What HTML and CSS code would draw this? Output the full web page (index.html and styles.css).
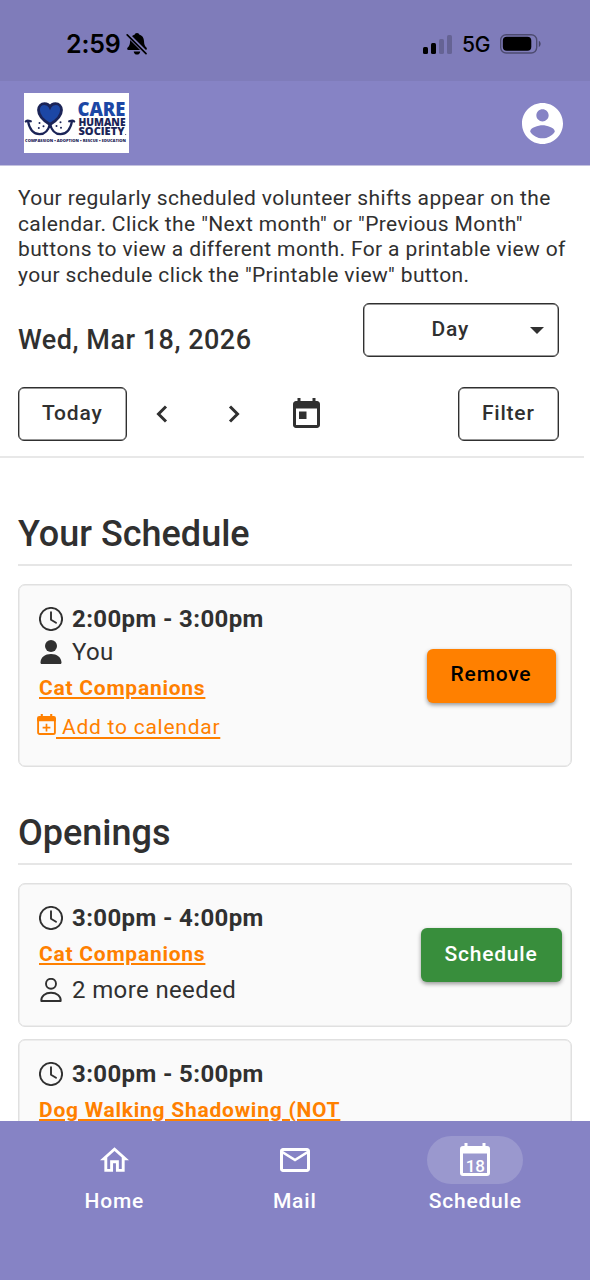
FILE: index.html
```html
<!DOCTYPE html>
<html lang="en">
<head>
<meta charset="utf-8">
<title>Schedule</title>
<link rel="stylesheet" href="styles.css">
</head>
<body>
<svg width="0" height="0" class="defs">
  <symbol id="clock" viewBox="0 0 24 24"><circle cx="12" cy="12" r="11.100"/><path d="M12 5.200V12.800l5 3"/></symbol>
</svg>
<div class="screen">
  <div class="status">
    <div class="status-left">
      <span class="time">2:59</span>
      <svg class="bell" viewBox="0 0 22 22"><path d="M11 0c1.600 0 2 .8 2.200 1.400 3 .8 4.600 3.300 4.800 6.600.1 3.500.7 5 2.600 6.800.6.7.4 2.200-1 2.200H2.500c-1.400 0-1.700-1.300-1-2.200C3.400 12.800 4 11.500 4.100 8c.1-3.300 1.700-5.800 4.700-6.600C9 .8 9.400 0 11 0zM7.700 18.400h6.600c-.2 1.900-1.500 3.200-3.300 3.200s-3.100-1.300-3.300-3.200z"/><path class="bell-gap" d="M1.500 1.500l19 19"/><path class="bell-slash" d="M1.200 1.800l18.800 18.800"/></svg>
    </div>
    <div class="status-right">
      <svg class="signal" viewBox="0 0 30 19"><rect x="0" y="12" width="5" height="7" rx="1.500"/><rect x="8" y="8" width="5" height="11" rx="1.500"/><rect class="dim" x="16" y="4" width="5" height="15" rx="1.500"/><rect class="dim" x="24" y="0" width="5" height="19" rx="1.500"/></svg>
      <span class="net">5G</span>
      <svg class="battery" viewBox="0 0 42 20"><rect class="shell" x=".7" y=".7" width="36" height="18.300" rx="5.500"/><rect x="2.800" y="2.800" width="28.500" height="14" rx="4"/><path class="cap" d="M38.800 6.800c2.400 1 2.400 5.200 0 6.200z"/></svg>
    </div>
  </div>
  <header class="header">
    <svg class="logo" viewBox="0 0 105 60">
      <rect width="105" height="60" fill="#fff"/>
      <path class="heart" d="M26 31.500C20.500 28.200 14.500 23 14.500 17c0-3.800 2.700-6.400 6-6.400 2.500 0 4.500 1.300 5.500 3.400 1-2.100 3-3.400 5.500-3.400 3.300 0 6 2.600 6 6.400 0 6-6 11.200-11.500 14.500z"/>
      <path class="smile" d="M1.800 28.500Q2.500 26.800 6.800 28.300M3.900 28C5.500 36 9.500 41.200 15.500 41.200 21.500 41.200 24.700 36.500 26 30.500 27.300 36.500 30.500 41.200 36.500 41.200 42.500 41.200 46.500 36 48.100 28M45.200 28.300Q49.500 26.800 50.200 28.500"/>
      <g class="ink"><circle cx="15.500" cy="30" r="1"/><circle cx="19.500" cy="33.200" r="1"/><circle cx="14.800" cy="35" r="1"/><circle cx="36.500" cy="29.300" r="1"/><circle cx="32.500" cy="33" r="1"/><circle cx="37" cy="34.800" r="1"/></g>
      <text class="logo-care" x="53.500" y="23.400" textLength="48" lengthAdjust="spacingAndGlyphs">CARE</text>
      <text class="logo-sub" x="54.500" y="32.700" textLength="47" lengthAdjust="spacingAndGlyphs">HUMANE</text>
      <text class="logo-sub" x="54.500" y="42" textLength="46" lengthAdjust="spacingAndGlyphs">SOCIETY</text>
      <text class="logo-tag" x="1" y="49.300" textLength="101" lengthAdjust="spacingAndGlyphs">COMPASSION • ADOPTION • RESCUE • EDUCATION</text>
      <circle class="ink" cx="101.700" cy="41.500" r=".5"/>
    </svg>
    <svg class="avatar" viewBox="2 2 20 20"><path d="M12 2C6.480 2 2 6.480 2 12s4.480 10 10 10 10-4.480 10-10S17.520 2 12 2zm0 3c1.660 0 3 1.340 3 3s-1.340 3-3 3-3-1.340-3-3 1.340-3 3-3zm0 14.200c-2.500 0-4.710-1.280-6-3.220.030-1.990 4-3.080 6-3.080 1.990 0 5.970 1.090 6 3.080-1.290 1.940-3.500 3.220-6 3.220z"/></svg>
  </header>
  <main class="main">
    <p class="intro">Your regularly scheduled volunteer shifts appear on the<br>calendar. Click the "Next month" or "Previous Month"<br>buttons to view a different month. For a printable view of<br>your schedule click the "Printable view" button.</p>
    <div class="date-row">
      <span class="date">Wed, Mar 18, 2026</span>
      <button class="outlined select"><span class="select-label">Day</span><svg class="caret" viewBox="0 0 14 7"><path d="M0 0h14L7 7z"/></svg></button>
    </div>
    <div class="tools">
      <button class="outlined today">Today</button>
      <svg class="chev prev" viewBox="0 0 12 18"><path d="M10 1.500L2.500 9l7.500 7.500"/></svg>
      <svg class="chev next" viewBox="0 0 12 18"><path d="M2 1.500L9.500 9 2 16.500"/></svg>
      <svg class="cal" viewBox="3 1 18 20"><path d="M19 3h-1V1h-2v2H8V1H6v2H5c-1.110 0-1.990.9-1.990 2L3 19c0 1.100.89 2 2 2h14c1.100 0 2-.9 2-2V5c0-1.100-.9-2-2-2zm0 16H5V8h14v11zM7 10h5v5H7z"/></svg>
      <button class="outlined filter">Filter</button>
    </div>
    <section class="section">
      <h2 class="title">Your Schedule</h2>
      <article class="card mine">
        <div class="info">
          <div class="line time-line"><svg class="ico clock"><use href="#clock"/></svg><span>2:00pm - 3:00pm</span></div>
          <div class="line"><svg class="ico" viewBox="0 0 24 24"><circle cx="12" cy="6" r="6"/><path d="M3 24c-1.200 0-1.600-.8-1.500-1.800C2 17 6 14 12 14s10 3 10.500 8.200c.1 1-.3 1.800-1.500 1.800z"/></svg><span>You</span></div>
          <a class="role">Cat Companions</a>
          <a class="add"><svg class="add-ico" viewBox="0 0 18 20"><rect class="box" x="1" y="3.500" width="16" height="15.500" rx="1.500"/><path d="M0 7V4a2 2 0 0 1 2-2h14a2 2 0 0 1 2 2v3zM3.500 0h2v3h-2zM12.500 0h2v3h-2zM8.200 9.300h1.600v2.900h2.900v1.600H9.800v2.900H8.200v-2.900H5.300v-1.600h2.900z"/></svg><span class="add-text">&nbsp;Add to calendar</span></a>
        </div>
        <button class="btn remove">Remove</button>
      </article>
    </section>
    <section class="section openings">
      <h2 class="title">Openings</h2>
      <article class="card open">
        <div class="info">
          <div class="line time-line"><svg class="ico clock"><use href="#clock"/></svg><span>3:00pm - 4:00pm</span></div>
          <a class="role">Cat Companions</a>
          <div class="line need"><svg class="ico outline" viewBox="0 0 24 24"><circle cx="12" cy="5.800" r="5"/><path d="M2.300 23c-.4-5.200 4.200-8.200 9.700-8.200s10.100 3 9.700 8.200z"/></svg><span>2 more needed</span></div>
        </div>
        <button class="btn schedule">Schedule</button>
      </article>
      <article class="card open">
        <div class="info">
          <div class="line time-line"><svg class="ico clock"><use href="#clock"/></svg><span>3:00pm - 5:00pm</span></div>
          <a class="role">Dog Walking Shadowing (NOT</a>
        </div>
      </article>
    </section>
  </main>
  <nav class="nav">
    <div class="tab"><span class="pill"><svg class="home" viewBox="2 3 20 17"><path d="M12 5.690l5 4.500V18h-2v-6H9v6H7v-7.810l5-4.500M12 3L2 12h3v8h6v-6h2v6h6v-8h3L12 3z"/></svg></span><span class="tab-label">Home</span></div>
    <div class="tab"><span class="pill"><svg class="mail" viewBox="2 4 20 16"><path d="M22 6c0-1.100-.9-2-2-2H4c-1.100 0-2 .9-2 2v12c0 1.100.9 2 2 2h16c1.100 0 2-.9 2-2V6zm-2 0l-8 5-8-5h16zm0 12H4V8l8 5 8-5v10z"/></svg></span><span class="tab-label">Mail</span></div>
    <div class="tab"><span class="pill active"><svg class="cal18" viewBox="0 0 30 33"><path fill-rule="evenodd" d="M4.500 0h3v3h15V0h3v3h1.500a3 3 0 0 1 3 3v24a3 3 0 0 1-3 3H3a3 3 0 0 1-3-3V6a3 3 0 0 1 3-3h1.500zM3 10.500V30h24V10.500z"/><text x="15.300" y="28.500">18</text></svg></span><span class="tab-label">Schedule</span></div>
  </nav>
</div>
</body>
</html>
```
FILE: styles.css
```css
* { box-sizing: border-box; }
body { margin: 0; background: #fff; font-family: Roboto, sans-serif; color: #303030; }
.defs { position: absolute; }
svg { display: block; flex: none; }
.screen { width: 590px; height: 1280px; display: flex; flex-direction: column; overflow: hidden; }

.status { height: 81px; flex: none; background: #7f7cba; display: flex; justify-content: space-between; padding: 7px 48px 0 66px; color: #000; font-family: Inter, sans-serif; }
.status-left, .status-right { display: flex; align-items: center; }
.time { font-size: 25px; font-weight: 600; letter-spacing: -.2px; }
.bell { width: 22px; height: 22px; margin-left: 6px; }
.bell-gap { stroke: #7f7cba; stroke-width: 4; }
.bell-slash { stroke: #000; stroke-width: 1.700; stroke-linecap: round; }
.signal { width: 30px; height: 19px; }
.dim { opacity: .2; }
.net { font-size: 21px; font-weight: 500; margin-left: 9px; letter-spacing: -.4px; }
.battery { width: 42px; height: 20px; margin-left: 10px; }
.shell { fill: none; stroke: #000; stroke-opacity: .4; stroke-width: 1.400; }
.cap { opacity: .45; }

.header { height: 85px; flex: none; background: #8683c5; border-bottom: 1px solid #c4c2df; display: flex; justify-content: space-between; align-items: center; padding: 0 27.500px 0 24px; }
.logo { width: 105px; height: 60px; margin-bottom: 1px; }
.heart { fill: #1c47a5; stroke: #1b2457; stroke-width: 2.800; }
.smile { fill: none; stroke: #1b2457; stroke-width: 2.200; stroke-linecap: round; }
.ink { fill: #1b2457; }
.logo-care { font: 800 19px "Open Sans", sans-serif; fill: #1c47a5; }
.logo-sub { font: 800 9.800px "Open Sans", sans-serif; fill: #1b2457; }
.logo-tag { font: 800 3.900px "Open Sans", sans-serif; fill: #1b2457; }
.avatar { width: 41px; height: 41px; fill: #fff; }

.main { flex: 1; min-height: 0; overflow: hidden; }
.intro { margin: 0; padding: 20px 0 0 18px; height: 137px; font-size: 21px; line-height: 25.500px; letter-spacing: .375px; white-space: nowrap; }
.date-row { display: flex; justify-content: space-between; align-items: flex-start; padding: 0 31.500px 0 18px; height: 84px; }
.date { font-size: 27px; font-weight: 500; line-height: 32px; padding-top: 21px; letter-spacing: .5px; }
.outlined { height: 54px; border: 1px solid #303030; box-shadow: inset 0 0 0 .4px #303030; border-radius: 6px; background: #fff; font: 500 21px Roboto, sans-serif; letter-spacing: .8px; color: #303030; padding: 0 0 3px; }
.select { width: 195.500px; display: flex; align-items: center; }
.select-label { flex: 1; padding-left: 7px; }
.caret { width: 14px; height: 7px; margin: 4px 14px 0 0; fill: #303030; }
.tools { display: flex; align-items: center; height: 71px; width: 584px; padding: 0 25.500px 15px 18px; border-bottom: 2px solid #e8e8e8; }
.today { width: 108.500px; }
.chev { width: 12px; height: 18px; fill: none; stroke: #303030; stroke-width: 3; }
.prev { margin-left: 29px; }
.next { margin-left: 60px; }
.cal { width: 27px; height: 30px; margin: 0 0 3px 53px; fill: #303030; }
.filter { width: 100.500px; margin-left: auto; }

.section { padding: 0 18px; margin-top: 52px; }
.openings { margin-top: 42px; }
.title { margin: 0 0 18px; font-size: 36px; line-height: 49px; height: 56px; font-weight: 500; border-bottom: 2px solid #e6e6e6; }
.card { display: flex; justify-content: space-between; align-items: center; background: #fafafa; border: 1px solid #e0e0e0; box-shadow: inset 0 0 0 .5px #e0e0e0; border-radius: 7px; padding: 0 15.500px 0 20px; }
.mine { height: 183px; }
.open { height: 144px; padding-right: 9.500px; margin-bottom: 12px; }
.info { align-self: flex-start; padding-top: 17px; display: flex; flex-direction: column; align-items: flex-start; }
.line { display: flex; align-items: center; gap: 9px; height: 33px; font-size: 24px; letter-spacing: .375px; }
.time-line { font-weight: 700; }
.ico { width: 24px; height: 24px; fill: #303030; }
.clock, .outline { fill: none; stroke: #303030; stroke-width: 1.900; stroke-linejoin: round; stroke-linecap: round; }
.role { font-size: 21px; line-height: 25px; margin-top: 8px; font-weight: 700; letter-spacing: .75px; color: #ff8000; text-decoration: underline; text-decoration-thickness: 1.500px; text-underline-offset: 2px; white-space: nowrap; }
.need { margin-top: 6px; }
.add { display: flex; align-items: center; margin: 13px 0 0 -2px; font-size: 21px; line-height: 25px; letter-spacing: .75px; color: #ff8000; }
.add-ico { width: 19px; height: 21px; fill: #ff8000; margin-bottom: 6px; }
.box { fill: none; stroke: #ff8000; stroke-width: 1.800; }
.add-text { text-decoration: underline; text-decoration-thickness: 1.500px; text-underline-offset: 3px; }
.btn { height: 54px; border: 0; border-radius: 6px; font: 500 21px Roboto, sans-serif; letter-spacing: .8px; padding: 0 0 3px; box-shadow: 0 2px 4px rgba(0,0,0,.4); }
.remove { width: 129px; background: #ff8000; color: #000; }
.schedule { width: 141px; background: #388e3c; color: #fff; }

.nav { height: 159px; flex: none; background: #8683c5; display: flex; padding: 15px 24px 0; color: #fff; }
.tab { width: 180.500px; display: flex; flex-direction: column; align-items: center; }
.pill { width: 96px; height: 48px; border-radius: 24px; display: flex; align-items: center; justify-content: center; fill: #fff; padding-bottom: 1px; }
.active { background: #9a98ce; }
.tab-label { font-size: 21px; font-weight: 500; line-height: 24px; margin-top: 5px; letter-spacing: .8px; }
.home { width: 29px; height: 25px; }
.mail { width: 30px; height: 24px; }
.cal18 { width: 30px; height: 33px; }
.cal18 text { font: 500 17px Roboto, sans-serif; text-anchor: middle; }
```
